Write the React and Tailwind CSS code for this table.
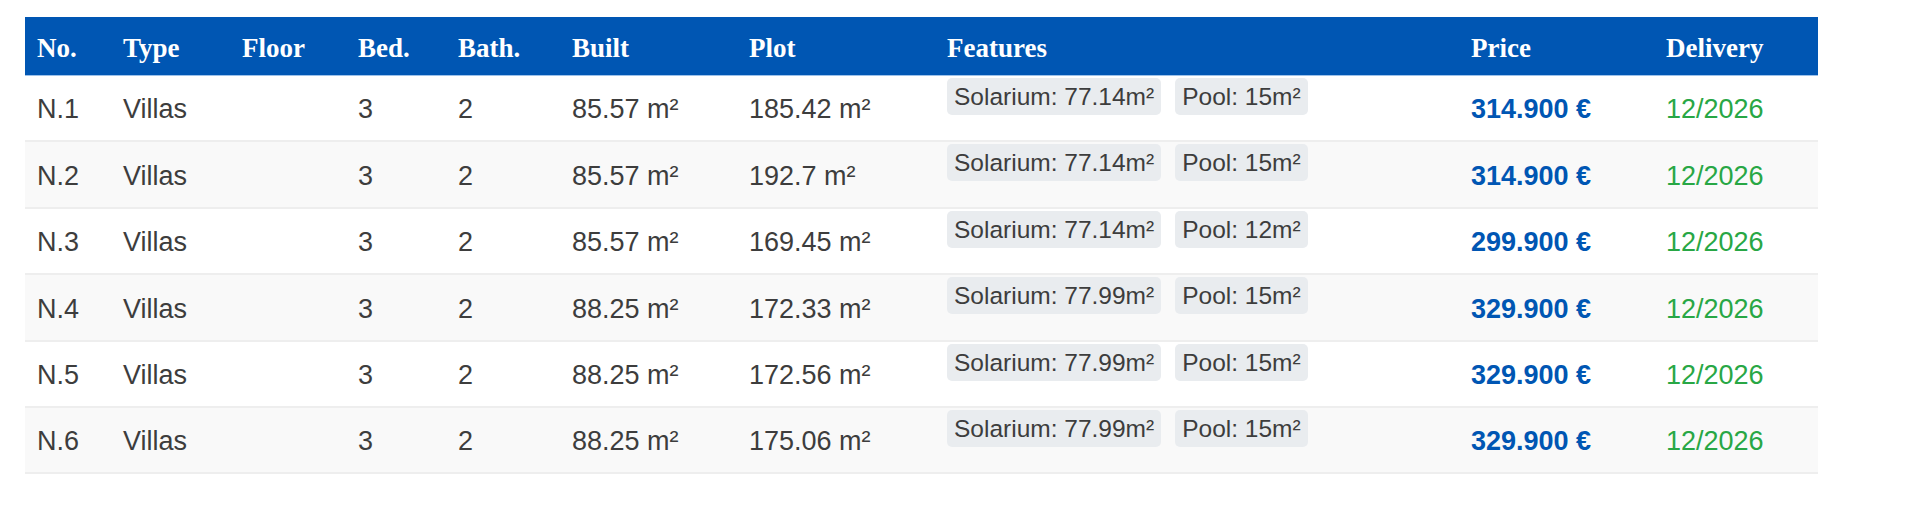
import React from 'react'

const cols = 'grid grid-cols-[86px_119px_116px_100px_114px_177px_198px_524px_195px_164px]'

const units = [
  { no: 'N.1', built: '85.57 m²', plot: '185.42 m²', solarium: '77.14m²', pool: '15m²', price: '314.900 €' },
  { no: 'N.2', built: '85.57 m²', plot: '192.7 m²', solarium: '77.14m²', pool: '15m²', price: '314.900 €' },
  { no: 'N.3', built: '85.57 m²', plot: '169.45 m²', solarium: '77.14m²', pool: '12m²', price: '299.900 €' },
  { no: 'N.4', built: '88.25 m²', plot: '172.33 m²', solarium: '77.99m²', pool: '15m²', price: '329.900 €' },
  { no: 'N.5', built: '88.25 m²', plot: '172.56 m²', solarium: '77.99m²', pool: '15m²', price: '329.900 €' },
  { no: 'N.6', built: '88.25 m²', plot: '175.06 m²', solarium: '77.99m²', pool: '15m²', price: '329.900 €' },
]

const headers = ['No.', 'Type', 'Floor', 'Bed.', 'Bath.', 'Built', 'Plot', 'Features', 'Price', 'Delivery']

function Badge({ children }) {
  return (
    <span className="inline-block bg-[#e9ecef] text-[#3d3d3d] rounded-[5px] px-[7px] h-[37px] leading-[37px] text-[24.5px] whitespace-nowrap">
      {children}
    </span>
  )
}

export default function App() {
  return (
    <div className="bg-white min-h-screen pt-[17px] pl-[25px] font-['Liberation_Sans',Arial,sans-serif]">
      <div className="w-[1793px]">
        {/* header */}
        <div className={`${cols} h-[59px] bg-[#0056b3] border-b border-[#9cc1ea] items-center text-white font-bold text-[27px] font-['Liberation_Serif','Times_New_Roman',serif]`}>
          {headers.map((h) => (
            <div key={h} className="px-3 pt-[4px]">{h}</div>
          ))}
        </div>

        {units.map((u, i) => (
          <div
            key={u.no}
            className={`${cols} h-[66.4px] border-b-2 border-[#eeeeee] text-[27px] text-[#3d3d3d] ${i % 2 === 1 ? 'bg-[#f9f9f9]' : 'bg-white'}`}
          >
            <div className="px-3 self-center pt-[3px]">{u.no}</div>
            <div className="px-3 self-center pt-[3px]">Villas</div>
            <div className="px-3 self-center pt-[3px]"></div>
            <div className="px-3 self-center pt-[3px]">3</div>
            <div className="px-3 self-center pt-[3px]">2</div>
            <div className="px-3 self-center pt-[3px]">{u.built}</div>
            <div className="px-3 self-center pt-[3px]">{u.plot}</div>
            <div className="px-3 pt-[2px] flex gap-[14px] items-start">
              <Badge>Solarium: {u.solarium}</Badge>
              <Badge>Pool: {u.pool}</Badge>
            </div>
            <div className="px-3 self-center pt-[3px] font-bold text-[#0056b3]">{u.price}</div>
            <div className="px-3 self-center pt-[3px] text-[#28a745]">12/2026</div>
          </div>
        ))}
      </div>
    </div>
  )
}
